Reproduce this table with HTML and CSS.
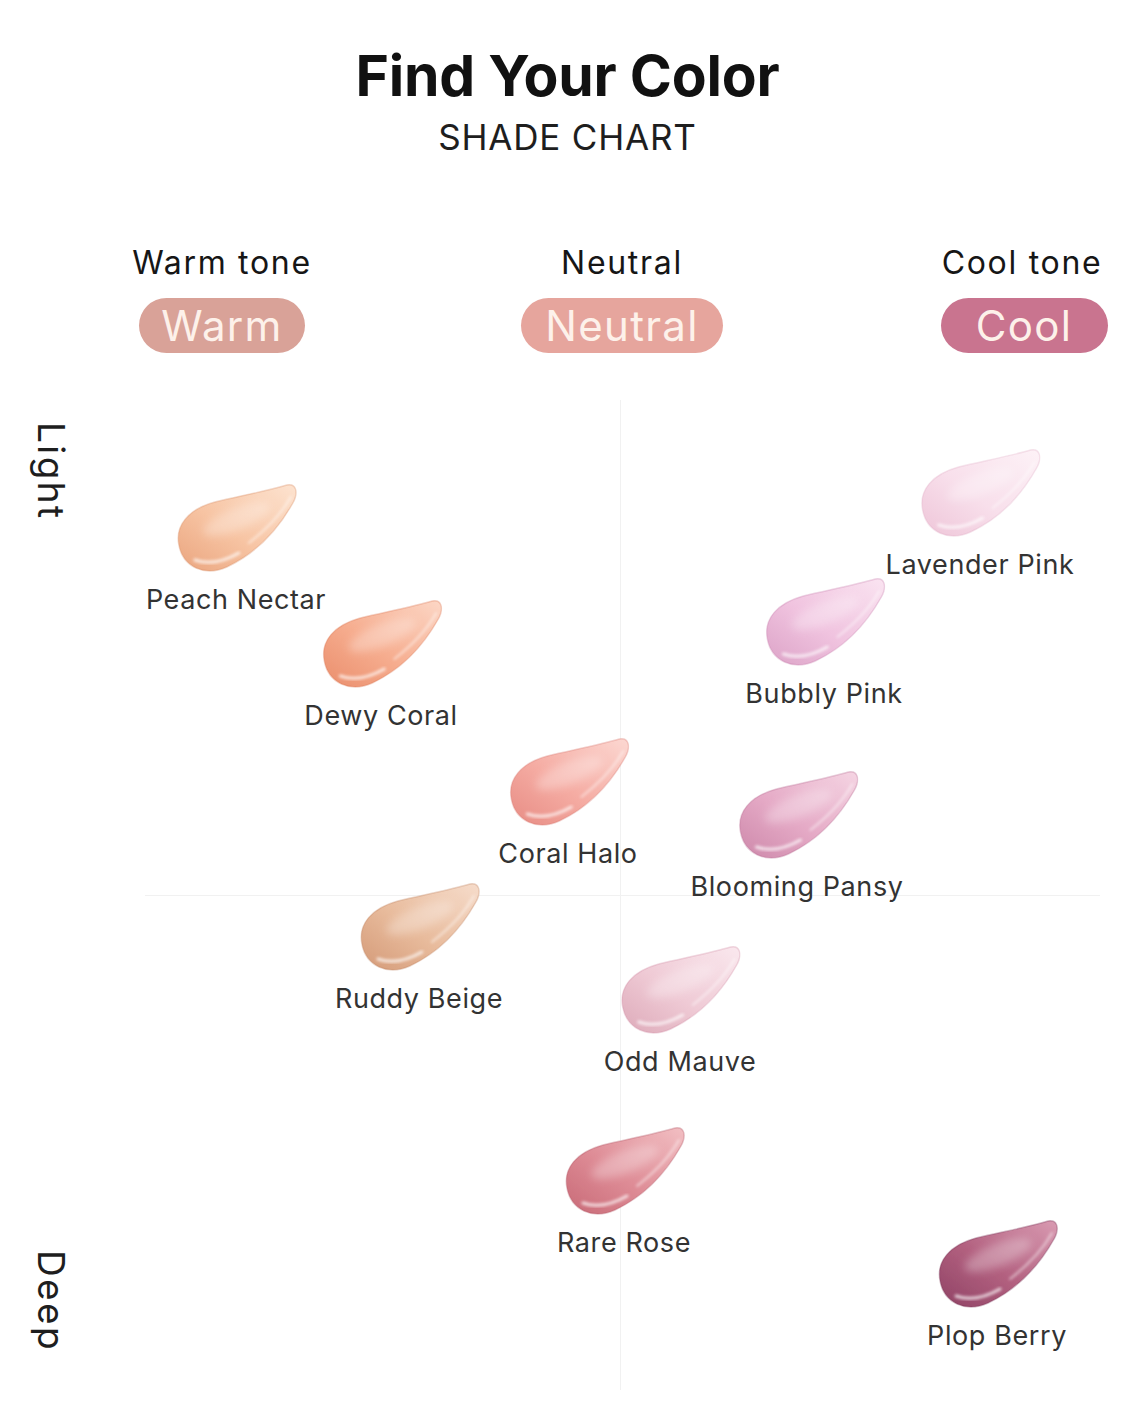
FILE: index.html
```html
<!DOCTYPE html>
<html lang="en">
<head>
<meta charset="utf-8">
<title>Find Your Color – Shade Chart</title>
<link rel="stylesheet" href="styles.css">
</head>
<body>
<svg class="defs" width="0" height="0" aria-hidden="true">
  <defs>
    <filter id="soft" x="-30%" y="-30%" width="160%" height="160%"><feGaussianBlur stdDeviation="1.4"/></filter>
    <filter id="haze" x="-30%" y="-30%" width="160%" height="160%"><feGaussianBlur stdDeviation="4"/></filter>
    <filter id="edge" x="-10%" y="-10%" width="120%" height="120%"><feGaussianBlur stdDeviation="0.6"/></filter>

    <linearGradient id="g-peach" x1="0" y1="1" x2="1" y2="0"><stop offset="0" stop-color="#eaa57f"/><stop offset=".45" stop-color="#f7c4a3"/><stop offset="1" stop-color="#fde3d0"/></linearGradient>
    <linearGradient id="g-dewy" x1="0" y1="1" x2="1" y2="0"><stop offset="0" stop-color="#ea8e6c"/><stop offset=".45" stop-color="#f6ad8f"/><stop offset="1" stop-color="#fcd7c6"/></linearGradient>
    <linearGradient id="g-halo" x1="0" y1="1" x2="1" y2="0"><stop offset="0" stop-color="#e78c84"/><stop offset=".45" stop-color="#f5aca3"/><stop offset="1" stop-color="#fcd8d2"/></linearGradient>
    <linearGradient id="g-ruddy" x1="0" y1="1" x2="1" y2="0"><stop offset="0" stop-color="#d49a78"/><stop offset=".45" stop-color="#e8bb9c"/><stop offset="1" stop-color="#f6dccb"/></linearGradient>
    <linearGradient id="g-mauve" x1="0" y1="1" x2="1" y2="0"><stop offset="0" stop-color="#ddaab9"/><stop offset=".45" stop-color="#efcad5"/><stop offset="1" stop-color="#fae8ee"/></linearGradient>
    <linearGradient id="g-rose" x1="0" y1="1" x2="1" y2="0"><stop offset="0" stop-color="#c86a77"/><stop offset=".45" stop-color="#de8c96"/><stop offset="1" stop-color="#f2bfc3"/></linearGradient>
    <linearGradient id="g-lav" x1="0" y1="1" x2="1" y2="0"><stop offset="0" stop-color="#eec5d8"/><stop offset=".45" stop-color="#f8dfeb"/><stop offset="1" stop-color="#fdf2f7"/></linearGradient>
    <linearGradient id="g-bubbly" x1="0" y1="1" x2="1" y2="0"><stop offset="0" stop-color="#dca3c7"/><stop offset=".45" stop-color="#f0c3df"/><stop offset="1" stop-color="#fae4f1"/></linearGradient>
    <linearGradient id="g-pansy" x1="0" y1="1" x2="1" y2="0"><stop offset="0" stop-color="#cd88aa"/><stop offset=".45" stop-color="#e5aac6"/><stop offset="1" stop-color="#f5d5e3"/></linearGradient>
    <linearGradient id="g-berry" x1="0" y1="1" x2="1" y2="0"><stop offset="0" stop-color="#8f4365"/><stop offset=".45" stop-color="#b2607f"/><stop offset="1" stop-color="#d99bb2"/></linearGradient>

    <symbol id="smear" viewBox="0 0 122 90">
      <path filter="url(#edge)" stroke-width="1.4" stroke-opacity=".35" d="M4 62 C0 42 14 26 40 19 C65 13 92 8 112 2 C121 0 124 9 118 20 C104 45 82 70 52 84 C30 94 8 84 4 62 Z"/>
      <ellipse cx="62" cy="36" rx="36" ry="11" transform="rotate(-22 62 36)" fill="#fff" stroke="none" opacity=".28" filter="url(#haze)"/>
      <path d="M20 77 C34 82 50 78 64 70" fill="none" stroke="#fff" stroke-width="3" stroke-linecap="round" opacity=".75" filter="url(#soft)"/>
      <path d="M74 60 C92 46 106 32 116 14" fill="none" stroke="#fff" stroke-width="2" stroke-linecap="round" opacity=".55" filter="url(#soft)"/>
    </symbol>
  </defs>
</svg>

<main class="page">
  <header class="head">
    <h1 class="title">Find Your Color</h1>
    <p class="subtitle">SHADE CHART</p>
  </header>

  <div class="tones">
    <div class="tone">
      <span class="tone-name">Warm tone</span>
      <span class="pill pill-warm">Warm</span>
    </div>
    <div class="tone">
      <span class="tone-name">Neutral</span>
      <span class="pill pill-neutral">Neutral</span>
    </div>
    <div class="tone">
      <span class="tone-name">Cool tone</span>
      <span class="pill pill-cool">Cool</span>
    </div>
  </div>

  <section class="chart">
    <div class="axis-v"></div>
    <div class="axis-h"></div>
    <span class="axis-label axis-light">Light</span>
    <span class="axis-label axis-deep">Deep</span>

    <figure class="shade" style="left:236px; top:103px">
      <svg class="swatch" viewBox="0 0 122 90"><use href="#smear" fill="url(#g-peach)" stroke="#d98f68"/></svg>
      <figcaption>Peach Nectar</figcaption>
    </figure>
    <figure class="shade" style="left:381px; top:219px">
      <svg class="swatch" viewBox="0 0 122 90"><use href="#smear" fill="url(#g-dewy)" stroke="#dc7b58"/></svg>
      <figcaption>Dewy Coral</figcaption>
    </figure>
    <figure class="shade" style="left:568px; top:357px">
      <svg class="swatch" viewBox="0 0 122 90"><use href="#smear" fill="url(#g-halo)" stroke="#da7a72"/></svg>
      <figcaption>Coral Halo</figcaption>
    </figure>
    <figure class="shade" style="left:419px; top:502px">
      <svg class="swatch" viewBox="0 0 122 90"><use href="#smear" fill="url(#g-ruddy)" stroke="#c48664"/></svg>
      <figcaption>Ruddy Beige</figcaption>
    </figure>
    <figure class="shade" style="left:680px; top:565px">
      <svg class="swatch" viewBox="0 0 122 90"><use href="#smear" fill="url(#g-mauve)" stroke="#d393a8"/></svg>
      <figcaption>Odd Mauve</figcaption>
    </figure>
    <figure class="shade" style="left:624px; top:746px">
      <svg class="swatch" viewBox="0 0 122 90"><use href="#smear" fill="url(#g-rose)" stroke="#b45966"/></svg>
      <figcaption>Rare Rose</figcaption>
    </figure>
    <figure class="shade" style="left:980px; top:68px">
      <svg class="swatch" viewBox="0 0 122 90"><use href="#smear" fill="url(#g-lav)" stroke="#e2b2c8"/></svg>
      <figcaption>Lavender Pink</figcaption>
    </figure>
    <figure class="shade" style="left:824px; top:197px">
      <svg class="swatch" viewBox="0 0 122 90"><use href="#smear" fill="url(#g-bubbly)" stroke="#cc88b3"/></svg>
      <figcaption>Bubbly Pink</figcaption>
    </figure>
    <figure class="shade" style="left:797px; top:390px">
      <svg class="swatch" viewBox="0 0 122 90"><use href="#smear" fill="url(#g-pansy)" stroke="#bb6f94"/></svg>
      <figcaption>Blooming Pansy</figcaption>
    </figure>
    <figure class="shade" style="left:997px; top:839px">
      <svg class="swatch" viewBox="0 0 122 90"><use href="#smear" fill="url(#g-berry)" stroke="#7a3455"/></svg>
      <figcaption>Plop Berry</figcaption>
    </figure>
  </section>
</main>
</body>
</html>
```

FILE: styles.css
```css
* { box-sizing: border-box; }

html, body {
  margin: 0;
  padding: 0;
  background: #ffffff;
}

body {
  font-family: Inter, "Liberation Sans", Arial, sans-serif;
  color: #1a1a1a;
}

.defs {
  position: absolute;
  width: 0;
  height: 0;
  overflow: hidden;
}

.page {
  width: 1135px;
  height: 1419px;
  overflow: hidden;
  display: flex;
  flex-direction: column;
}

.head {
  padding-top: 41px;
  text-align: center;
}

.title {
  margin: 0;
  font-size: 57px;
  line-height: 70px;
  font-weight: 700;
  color: #111111;
  letter-spacing: -0.2px;
}

.subtitle {
  margin: 4px 0 0;
  font-size: 35px;
  line-height: 44px;
  font-weight: 400;
  color: #1e1e1e;
  letter-spacing: 0.8px;
}

.tones {
  margin-top: 86px;
  padding-left: 22px;
  display: grid;
  grid-template-columns: repeat(3, 400px);
}

.tone {
  display: flex;
  flex-direction: column;
  align-items: center;
  gap: 17px;
}

.tone-name {
  font-size: 32px;
  line-height: 36px;
  color: #161616;
  letter-spacing: 1.7px;
}

.pill {
  height: 55px;
  line-height: 55px;
  border-radius: 28px;
  font-size: 42px;
  letter-spacing: 1.3px;
  text-align: center;
  color: #fdf1ea;
}

.pill-warm { width: 166px; background: #d9a298; }
.pill-neutral { width: 202px; background: #e6a59d; }
.pill-cool { width: 167px; background: #c9748f; margin-left: 4px; }

.chart {
  position: relative;
  margin-top: 27px;
  flex: 1;
}

.axis-v {
  position: absolute;
  left: 620px;
  top: 20px;
  width: 1px;
  height: 990px;
  background: #f1f1f1;
}

.axis-h {
  position: absolute;
  left: 145px;
  top: 515px;
  width: 955px;
  height: 1px;
  background: #f1f1f1;
}

.axis-label {
  position: absolute;
  writing-mode: vertical-rl;
  font-size: 37px;
  line-height: 36px;
  letter-spacing: 2.4px;
  color: #1e1e1e;
}

.axis-light { left: 33px; top: 42px; }
.axis-deep { left: 33px; top: 870px; }

.shade {
  position: absolute;
  margin: 0;
  transform: translateX(-50%);
  display: flex;
  flex-direction: column;
  align-items: center;
  gap: 10px;
}

.swatch {
  display: block;
  width: 122px;
  height: 90px;
  overflow: visible;
}

.shade figcaption {
  font-size: 27px;
  line-height: 34px;
  letter-spacing: 0.6px;
  color: #333333;
  white-space: nowrap;
}
```
